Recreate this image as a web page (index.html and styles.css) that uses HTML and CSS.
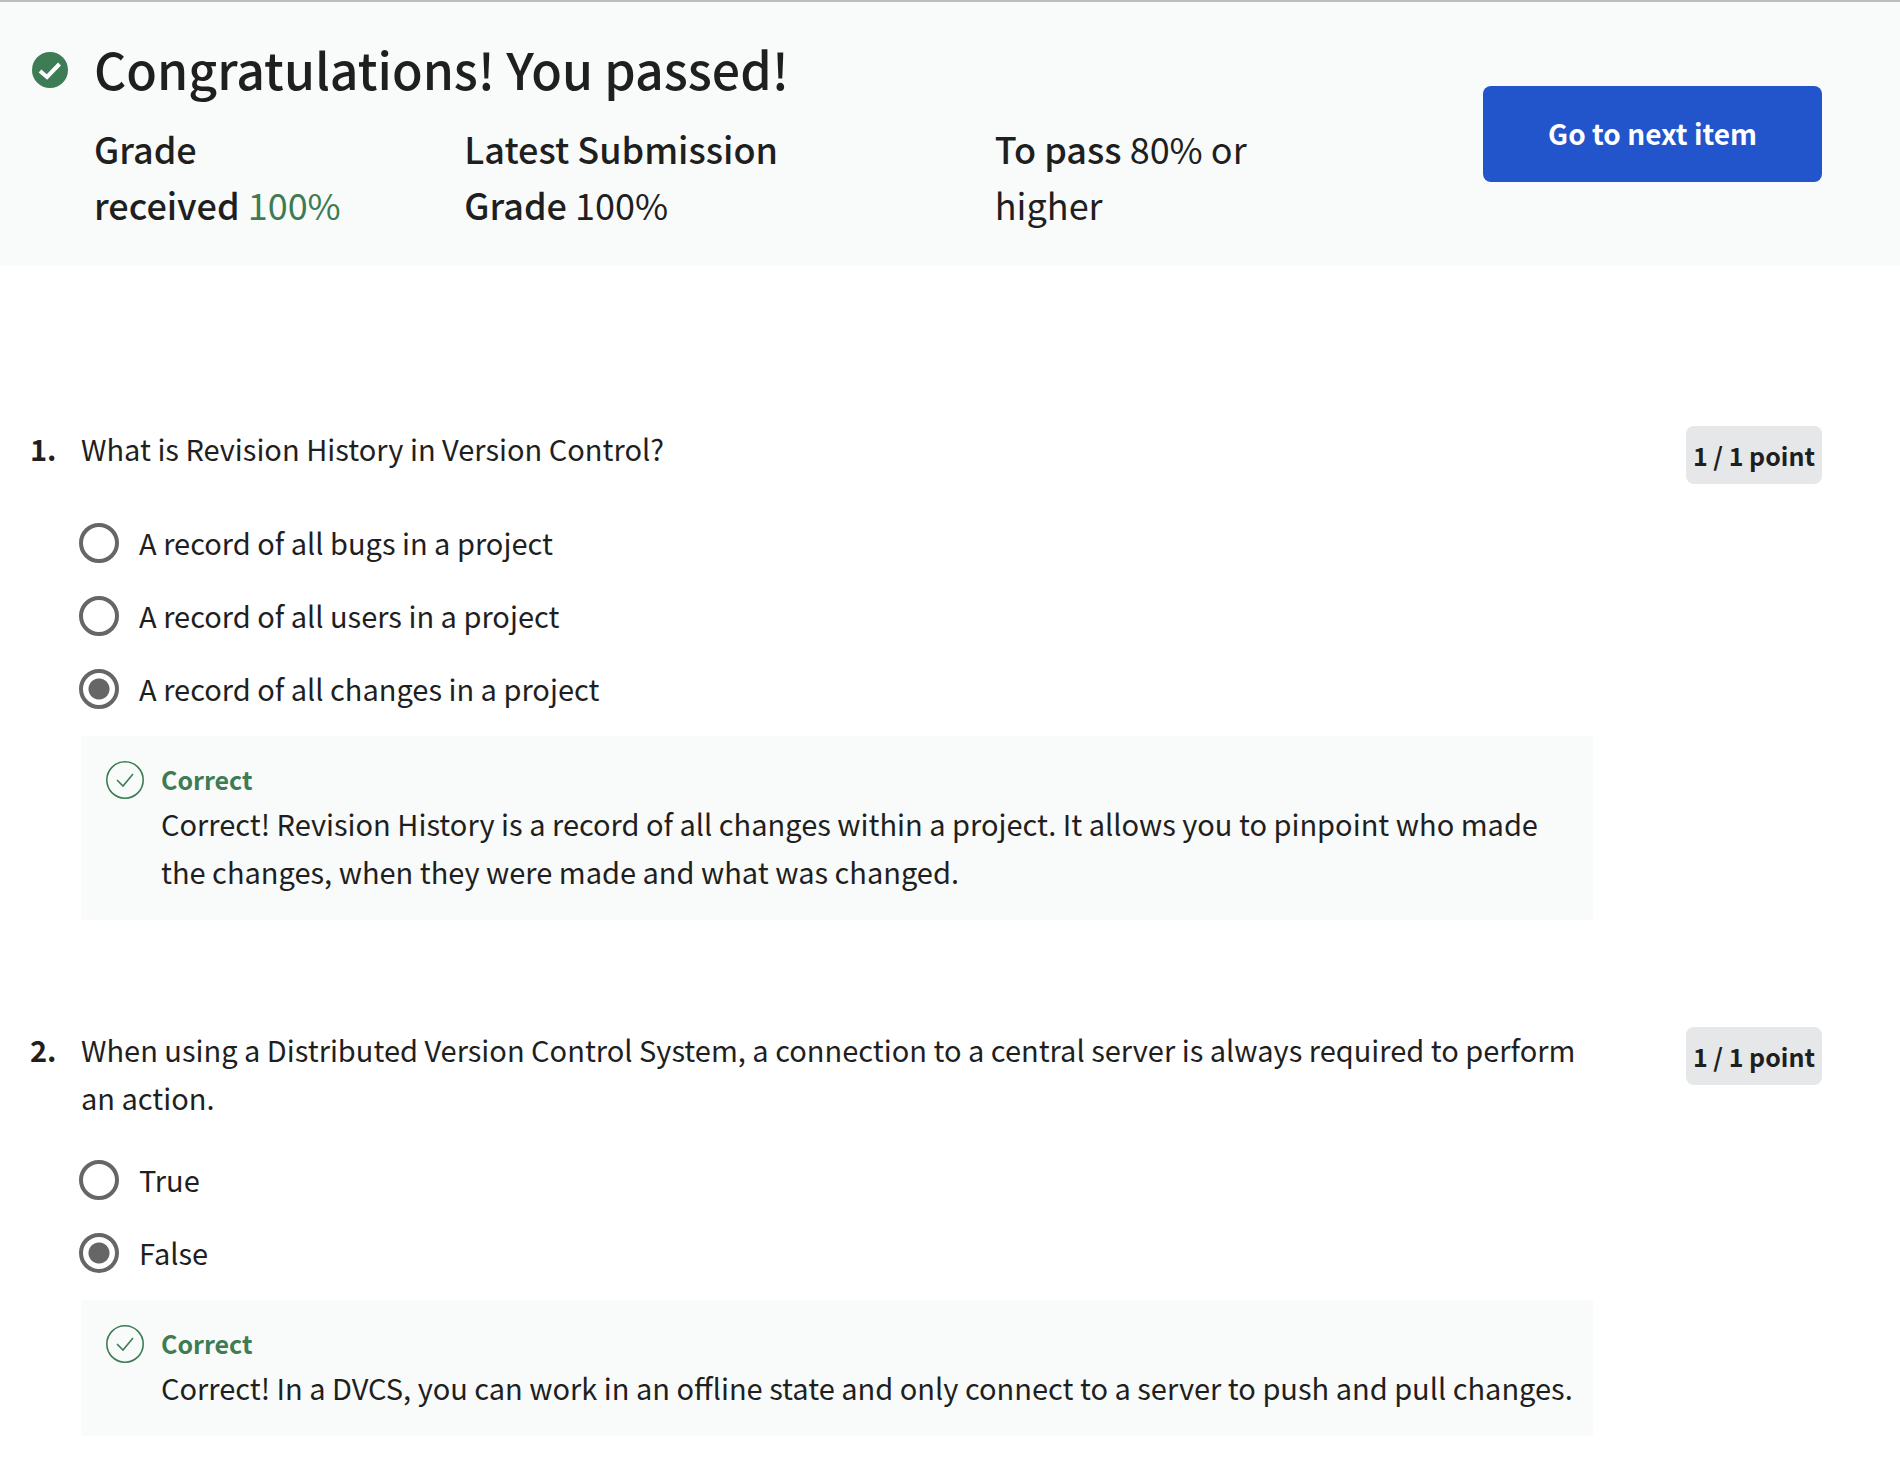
FILE: index.html
```html
<!DOCTYPE html>
<html lang="en">
<head>
<meta charset="utf-8">
<meta name="viewport" content="width=device-width, initial-scale=1">
<title>Quiz results</title>
<link rel="stylesheet" href="styles.css">
</head>
<body>
<header class="result">
  <svg class="result-icon" viewBox="0 0 36 36" aria-hidden="true">
    <circle cx="18" cy="18" r="18" fill="#3d7c54"/>
    <path d="M8 19 L15 25 L27.500 12" fill="none" stroke="#fff" stroke-width="4"/>
  </svg>
  <div class="result-main">
    <h1 class="result-title">Congratulations! You passed!</h1>
    <div class="grades">
      <p class="grade"><strong>Grade received</strong> <span class="grade-pass">100%</span></p>
      <p class="grade"><strong>Latest Submission Grade</strong> 100%</p>
      <p class="grade"><strong>To pass</strong> 80% or higher</p>
    </div>
  </div>
  <button class="next-button" type="button">Go to next item</button>
</header>
<main class="questions">
  <section class="question">
    <div class="question-number">1.</div>
    <div class="question-body">
      <h2 class="question-text" id="q1">What is Revision History in Version Control?</h2>
      <div class="options" role="radiogroup" aria-labelledby="q1">
        <label class="option"><input class="radio" type="radio" name="q1">A record of all bugs in a project</label>
        <label class="option"><input class="radio" type="radio" name="q1">A record of all users in a project</label>
        <label class="option"><input class="radio" type="radio" name="q1" checked>A record of all changes in a project</label>
      </div>
      <div class="feedback">
        <svg class="feedback-icon" viewBox="0 0 38 38" fill="none" stroke="#3d7c54" aria-hidden="true">
          <circle cx="19" cy="19" r="18.200" stroke-width="1.600"/>
          <path d="M11 19 L17 25 L27 13" stroke-width="1.600"/>
        </svg>
        <div class="feedback-content">
          <h3 class="feedback-title">Correct</h3>
          <p class="feedback-text">Correct! Revision History is a record of all changes within a project. It allows you to pinpoint who made the changes, when they were made and what was changed.</p>
        </div>
      </div>
    </div>
    <div class="points">1 / 1 point</div>
  </section>
  <section class="question">
    <div class="question-number">2.</div>
    <div class="question-body">
      <h2 class="question-text" id="q2">When using a Distributed Version Control System, a connection to a central server is always required to perform an action.</h2>
      <div class="options" role="radiogroup" aria-labelledby="q2">
        <label class="option"><input class="radio" type="radio" name="q2">True</label>
        <label class="option"><input class="radio" type="radio" name="q2" checked>False</label>
      </div>
      <div class="feedback">
        <svg class="feedback-icon" viewBox="0 0 38 38" fill="none" stroke="#3d7c54" aria-hidden="true">
          <circle cx="19" cy="19" r="18.200" stroke-width="1.600"/>
          <path d="M11 19 L17 25 L27 13" stroke-width="1.600"/>
        </svg>
        <div class="feedback-content">
          <h3 class="feedback-title">Correct</h3>
          <p class="feedback-text">Correct! In a DVCS, you can work in an offline state and only connect to a server to push and pull changes.</p>
        </div>
      </div>
    </div>
    <div class="points">1 / 1 point</div>
  </section>
</main>
</body>
</html>
```
FILE: styles.css
```css
* {
  box-sizing: border-box;
}

body {
  margin: 0;
  background: #fff;
  color: #1f1f1f;
  font-family: "Source Sans Pro", "Noto Sans CJK SC", sans-serif;
  font-size: 29px;
  line-height: 48px;
}

h1, h2, h3, p {
  margin: 0;
  font: inherit;
}

.result {
  display: flex;
  align-items: flex-start;
  padding: 34px 78px 34px 32px;
  border-top: 2px solid #bbbdbb;
  background: #f9fbfa;
}

.result-icon {
  flex: none;
  width: 36px;
  height: 36px;
  margin: 16px 26px 0 0;
}

.result-main {
  flex: 1;
  margin-right: 228px;
}

.result-title {
  margin-bottom: 20px;
  font-size: 50px;
  font-weight: 500;
  line-height: 64px;
}

.grades {
  display: grid;
  grid-template-columns: 25fr 41fr 26fr;
  gap: 120px;
}

.grade {
  font-size: 36px;
  line-height: 56px;
}

.grade strong {
  font-weight: 500;
}

.grade-pass {
  color: #3d7c54;
}

.next-button {
  flex: none;
  margin-top: 50px;
  padding: 23px 65px 25px;
  border: 0;
  border-radius: 8px;
  background: #2254cb;
  color: #fff;
  font: inherit;
  font-size: 28px;
  font-weight: 700;
}

.questions {
  padding: 158px 78px 24px 30px;
}

.question {
  display: flex;
  align-items: flex-start;
}

.question + .question {
  margin-top: 105px;
}

.question-number {
  flex: none;
  width: 51px;
  font-weight: 700;
}

.question-body {
  flex: 1;
}

.question-text {
  min-height: 60px;
}

.options {
  display: flex;
  flex-direction: column;
  gap: 25px;
  padding: 34px 0 24px;
}

.option {
  display: flex;
  align-items: flex-start;
  gap: 20px;
}

.radio {
  appearance: none;
  flex: none;
  width: 40px;
  height: 40px;
  margin: 5px 0 0 -2px;
  border: 4px solid #666;
  border-radius: 50%;
}

.radio:checked {
  background: radial-gradient(circle, #666 10px, transparent 11px);
}

.feedback {
  display: flex;
  gap: 17px;
  padding: 23px 16px 25px 25px;
  background: #f9fbfa;
}

.feedback-icon {
  flex: none;
  width: 38px;
  height: 38px;
  margin-top: 2px;
}

.feedback-title {
  color: #3d7c54;
  font-size: 25px;
  font-weight: 700;
  line-height: 40px;
}

.points {
  flex: none;
  margin: 2px 0 0 93px;
  padding: 9px 7px;
  border-radius: 8px;
  background: #e5e7e8;
  font-size: 25px;
  font-weight: 700;
  line-height: 40px;
}
```
